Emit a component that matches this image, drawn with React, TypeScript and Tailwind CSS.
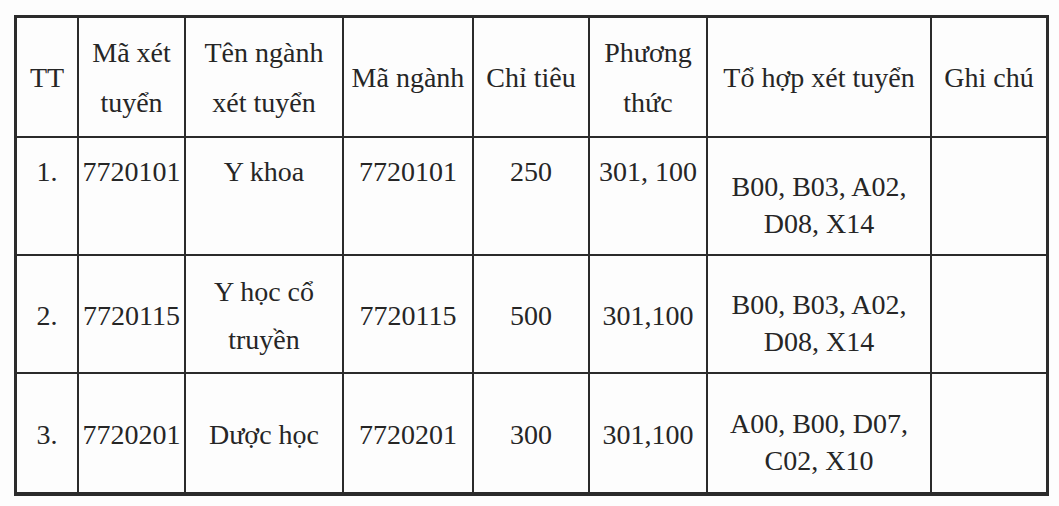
import React from 'react';

type Row = {
  tt: string;
  maXet: string;
  ten: string[];
  maNganh: string;
  chiTieu: string;
  phuongThuc: string;
  toHop: string[];
  top?: boolean;
};

const rows: Row[] = [
  {
    tt: '1.',
    maXet: '7720101',
    ten: ['Y khoa'],
    maNganh: '7720101',
    chiTieu: '250',
    phuongThuc: '301, 100',
    toHop: ['B00, B03, A02,', 'D08, X14'],
    top: true,
  },
  {
    tt: '2.',
    maXet: '7720115',
    ten: ['Y học cổ', 'truyền'],
    maNganh: '7720115',
    chiTieu: '500',
    phuongThuc: '301,100',
    toHop: ['B00, B03, A02,', 'D08, X14'],
  },
  {
    tt: '3.',
    maXet: '7720201',
    ten: ['Dược học'],
    maNganh: '7720201',
    chiTieu: '300',
    phuongThuc: '301,100',
    toHop: ['A00, B00, D07,', 'C02, X10'],
  },
];

const headers = [
  ['TT'],
  ['Mã xét', 'tuyển'],
  ['Tên ngành', 'xét tuyển'],
  ['Mã ngành'],
  ['Chỉ tiêu'],
  ['Phương', 'thức'],
  ['Tổ hợp xét tuyển'],
  ['Ghi chú'],
];

const Cell = ({ lines, top, className = '' }: { lines: string[]; top?: boolean; className?: string }) => (
  <div
    className={`bg-[#fdfdfd] flex flex-col items-center text-center whitespace-nowrap ${
      top ? 'justify-start pt-[10px]' : 'justify-center'
    } ${className}`}
  >
    {lines.map((l, i) => (
      <span key={i}>{l}</span>
    ))}
  </div>
);

export default function App() {
  return (
    <div className="w-[1059px] h-[506px] bg-[#fdfdfd] pt-[15px] pl-[14px] text-[28px] text-[#262626] font-['Liberation_Serif','Times_New_Roman',serif]">
      <div className="inline-grid grid-cols-[60px_105px_156px_128px_114px_116px_222px_114px] grid-rows-[118px_116px_116px_118px] gap-[2px] bg-[#2b2b2b] border-[3px] border-b-4 border-[#2b2b2b]">
        {/* header */}
        {headers.map((h, i) => (
          <Cell key={i} lines={h} className="leading-[50px] pt-[2px]" />
        ))}

        {rows.map((r) => {
          const lh = r.top ? 'leading-[48px]' : 'leading-[48px] pt-[4px]';
          return (
            <React.Fragment key={r.tt}>
              <Cell lines={[r.tt]} top={r.top} className={lh} />
              <Cell lines={[r.maXet]} top={r.top} className={lh} />
              <Cell lines={r.ten} top={r.top} className={lh} />
              <Cell lines={[r.maNganh]} top={r.top} className={lh} />
              <Cell lines={[r.chiTieu]} top={r.top} className={lh} />
              <Cell lines={[r.phuongThuc]} top={r.top} className={lh} />
              <Cell lines={r.toHop} className="leading-[37px] pt-[18px]" />
              <Cell lines={[]} />
            </React.Fragment>
          );
        })}
      </div>
    </div>
  );
}
